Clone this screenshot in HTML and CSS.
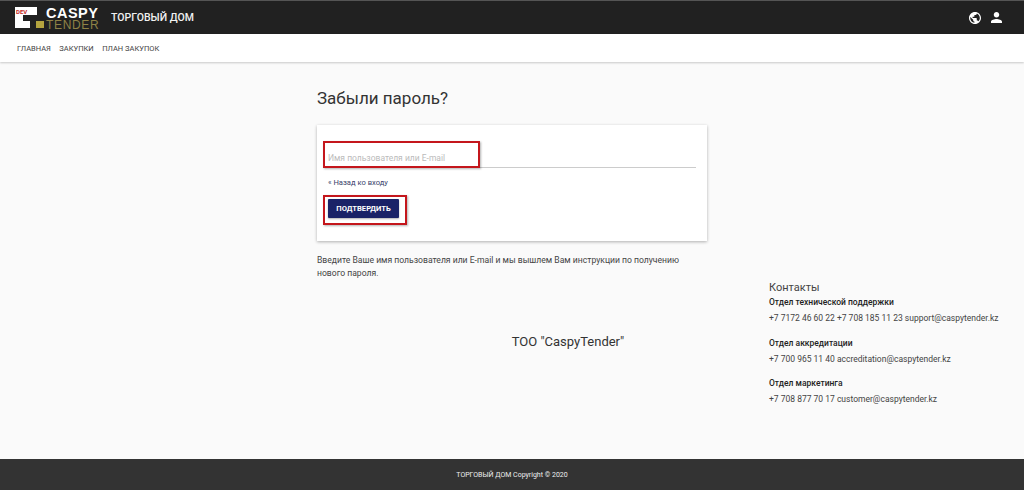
FILE: index.html
```html
<!DOCTYPE html>
<html lang="ru">
<head>
<meta charset="utf-8">
<title>Забыли пароль?</title>
<link rel="stylesheet" href="styles.css">
</head>
<body>
<header class="topbar">
  <div class="brand">
    <div class="logo">
      <svg class="logo-mark" width="29" height="21" viewBox="0 0 29 21" aria-hidden="true">
        <path fill="#fff" d="M0 0H22V8H8V14H15V21H0Z"/>
        <rect x="21" y="14" width="8" height="7" fill="#b5a53f"/>
      </svg>
      <span class="logo-dev">DEV</span>
    </div>
    <div class="logo-words">
      <span class="logo-caspy">CASPY</span>
      <span class="logo-tender">TENDER</span>
    </div>
    <span class="site-name">ТОРГОВЫЙ ДОМ</span>
  </div>
  <div class="top-icons">
    <svg width="12" height="12" viewBox="2 2 20 20" aria-hidden="true"><path fill="#fff" d="M12 2C6.48 2 2 6.48 2 12s4.48 10 10 10 10-4.48 10-10S17.52 2 12 2zm-1 17.93c-3.95-.49-7-3.85-7-7.93 0-.62.08-1.21.21-1.79L9 15v1c0 1.1.9 2 2 2v1.93zm6.9-2.54c-.26-.81-1-1.39-1.9-1.39h-1v-3c0-.55-.45-1-1-1H8v-2h2c.55 0 1-.45 1-1V7h2c1.1 0 2-.9 2-2v-.41c2.93 1.19 5 4.06 5 7.41 0 2.08-.8 3.97-2.1 5.39z"/></svg>
    <svg width="11" height="11" viewBox="4 4 16 16" aria-hidden="true"><path fill="#fff" d="M12 12c2.21 0 4-1.79 4-4s-1.79-4-4-4-4 1.79-4 4 1.79 4 4 4zm0 2c-2.67 0-8 1.34-8 4v2h16v-2c0-2.66-5.33-4-8-4z"/></svg>
  </div>
</header>
<nav class="menu">
  <a>ГЛАВНАЯ</a>
  <a>ЗАКУПКИ</a>
  <a>ПЛАН ЗАКУПОК</a>
</nav>
<main class="page">
  <section class="reset">
    <h1 class="reset-title">Забыли пароль?</h1>
    <div class="card">
      <div class="field"><span class="placeholder">Имя пользователя или E-mail</span></div>
      <a class="back">« Назад ко входу</a>
      <button class="submit" type="button">ПОДТВЕРДИТЬ</button>
      <i class="mark mark-input"></i>
      <i class="mark mark-button"></i>
    </div>
    <p class="hint">Введите Ваше имя пользователя или E-mail и мы вышлем Вам инструкции по получению нового пароля.</p>
  </section>
  <section class="lower">
    <div class="company">ТОО "CaspyTender"</div>
    <div class="contacts">
      <h2 class="contacts-title">Контакты</h2>
      <div class="dept">
        <h3>Отдел технической поддержки</h3>
        <p>+7 7172 46 60 22 +7 708 185 11 23 support@caspytender.kz</p>
      </div>
      <div class="dept">
        <h3>Отдел аккредитации</h3>
        <p>+7 700 965 11 40 accreditation@caspytender.kz</p>
      </div>
      <div class="dept">
        <h3>Отдел маркетинга</h3>
        <p>+7 708 877 70 17 customer@caspytender.kz</p>
      </div>
    </div>
  </section>
</main>
<footer class="footer">ТОРГОВЫЙ ДОМ Copyright © 2020</footer>
</body>
</html>
```
FILE: styles.css
```css
* { box-sizing: border-box; }
html, body { margin: 0; padding: 0; }
body {
  width: 1024px;
  height: 490px;
  overflow: hidden;
  display: flex;
  flex-direction: column;
  background: #fafafa;
  font-family: Roboto, "Liberation Sans", sans-serif;
  color: #333;
}
.topbar {
  height: 34px;
  flex: none;
  display: flex;
  align-items: center;
  justify-content: space-between;
  background: #212121;
  border-top: 1px solid #555;
  padding: 0 22px 0 15px;
}
.brand { display: flex; align-items: center; }
.logo { position: relative; display: flex; margin-right: 2px; }
.logo-dev {
  position: absolute;
  left: 1px;
  top: 1px;
  font: 700 6px/7px Roboto, sans-serif;
  color: #c62828;
}
.logo-words { display: flex; flex-direction: column; width: 52px; padding-top: 3px; }
.logo-caspy { font: 700 14.5px/12px "Liberation Sans", sans-serif; color: #fff; letter-spacing: .5px; }
.logo-tender { font: 400 12px/11px "Liberation Sans", sans-serif; color: #8f8246; letter-spacing: .65px; margin-top: 1px; }
.site-name { font-size: 10.5px; font-weight: 500; color: #f0f0f0; margin-left: 13px; }
.top-icons { display: flex; align-items: center; gap: 10px; }
.menu {
  height: 28px;
  flex: none;
  display: flex;
  align-items: center;
  gap: 8.5px;
  padding: 0 17px;
  background: #fff;
  box-shadow: 0 1px 2px rgba(0,0,0,.2);
  font-size: 7.5px;
  color: #444;
}
.page { flex: 1; display: flex; flex-direction: column; min-height: 0; }
.reset { width: 390px; margin-left: 317px; }
.reset-title { margin: 25px 0 16px; font-size: 17px; line-height: 22px; font-weight: 400; color: #333; }
.card {
  position: relative;
  height: 116px;
  padding: 18px 11px 0;
  background: #fff;
  box-shadow: 0 1px 3px rgba(0,0,0,.3);
  display: flex;
  flex-direction: column;
  align-items: flex-start;
}
.field { width: 100%; height: 25px; border-bottom: 1px solid #ccc; display: flex; align-items: flex-end; padding-bottom: 4px; }
.placeholder { font-size: 8.5px; color: #bbb; }
.back { margin-top: 10px; font-size: 7.6px; color: #3a3f6b; }
.submit {
  margin-top: 12px;
  width: 71px;
  height: 19px;
  padding: 0;
  border: 0;
  border-radius: 1px;
  background: #1a2267;
  color: #fff;
  font: 700 7.6px Roboto, sans-serif;
  box-shadow: 0 1px 2px rgba(0,0,0,.3);
}
.mark { position: absolute; display: block; border: 2px solid #c4161c; box-shadow: 1px 1px 2px rgba(0,0,0,.3); }
.mark-input { left: 6px; top: 16px; width: 157px; height: 27px; }
.mark-button { left: 6px; top: 70px; width: 84px; height: 30px; }
.hint { margin: 13px 0 0; font-size: 8.6px; line-height: 13px; color: #444; }
.lower { display: grid; grid-template-columns: 368px 400px 1fr; }
.company { grid-column: 2; align-self: center; text-align: center; font-size: 13px; color: #333; margin-bottom: 16px; }
.contacts { grid-column: 3; margin: 1px 0 0 1px; }
.contacts-title { margin: 0; font-size: 11px; line-height: 14px; font-weight: 400; color: #444; }
.dept { margin-bottom: 13.5px; }
.dept h3 { margin: 2px 0 5px; font-size: 8.5px; line-height: 11px; font-weight: 500; color: #222; }
.dept p { margin: 0; font-size: 8.5px; line-height: 11px; color: #444; white-space: nowrap; }
.footer {
  height: 31px;
  flex: none;
  display: flex;
  align-items: center;
  justify-content: center;
  background: #333;
  color: #eee;
  font-size: 7px;
}
```
